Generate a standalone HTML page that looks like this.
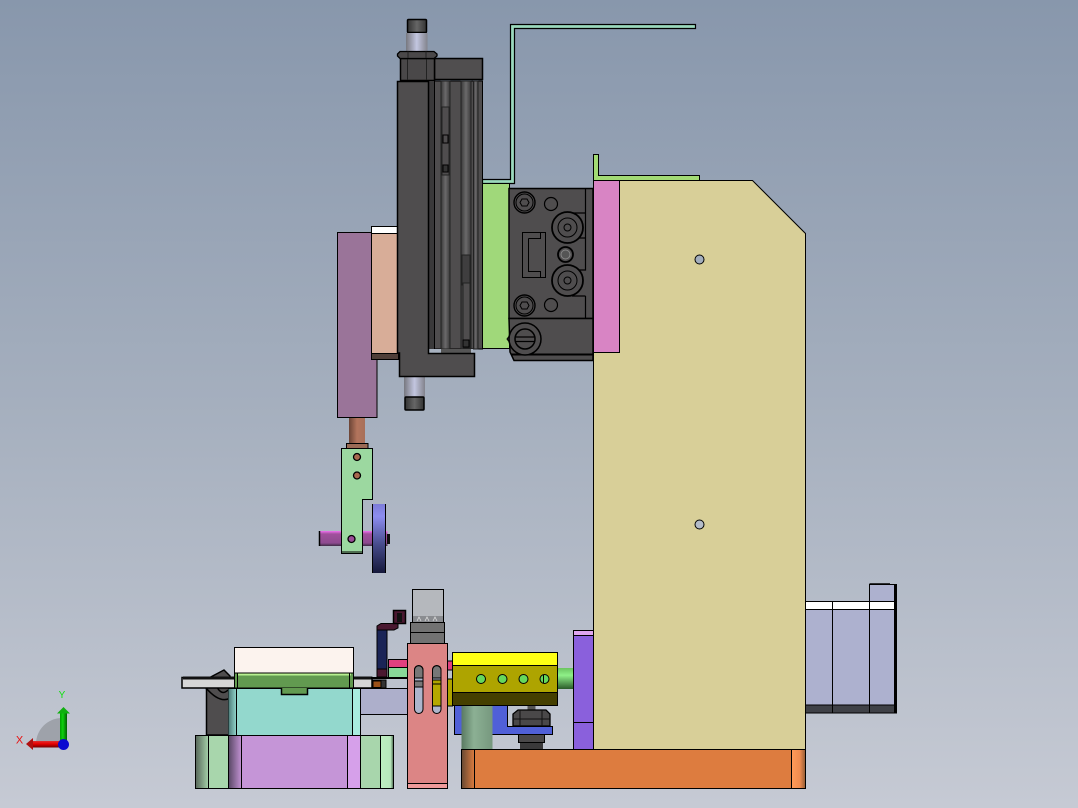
<!DOCTYPE html>
<html><head><meta charset="utf-8"><style>
html,body{margin:0;padding:0;width:1078px;height:808px;overflow:hidden;background:#a8b2c0}
svg{display:block}
text{font-family:"Liberation Sans",sans-serif}
</style></head><body>
<svg width="1078" height="808" viewBox="0 0 1078 808" xmlns="http://www.w3.org/2000/svg">
<defs>
<linearGradient id="bg" x1="0" y1="0" x2="0" y2="1"><stop offset="0" stop-color="#8897ac"/><stop offset=".5" stop-color="#a5afbe"/><stop offset="1" stop-color="#c6cad4"/></linearGradient>
<linearGradient id="rod" x1="0" x2="1" y1="0" y2="0"><stop offset="0" stop-color="#77787f"/><stop offset=".5" stop-color="#c3c6e0"/><stop offset="1" stop-color="#82838c"/></linearGradient>
<linearGradient id="cap" x1="0" x2="1" y1="0" y2="0"><stop offset="0" stop-color="#333"/><stop offset=".5" stop-color="#666"/><stop offset="1" stop-color="#333"/></linearGradient>
<linearGradient id="rib" x1="0" x2="1" y1="0" y2="0"><stop offset="0" stop-color="#3a393a"/><stop offset=".5" stop-color="#6b6a6b"/><stop offset="1" stop-color="#3a393a"/></linearGradient>
<linearGradient id="cop" x1="0" x2="1" y1="0" y2="0"><stop offset="0" stop-color="#6b4436"/><stop offset=".5" stop-color="#b2745c"/><stop offset="1" stop-color="#a8705a"/></linearGradient>
<linearGradient id="wheel" x1="0" x2="0" y1="0" y2="1"><stop offset="0" stop-color="#7c7cd8"/><stop offset=".18" stop-color="#8d8df0"/><stop offset=".6" stop-color="#454a88"/><stop offset="1" stop-color="#15183a"/></linearGradient>
<linearGradient id="pbar" x1="0" x2="0" y1="0" y2="1"><stop offset="0" stop-color="#f070f0"/><stop offset=".2" stop-color="#a0509c"/><stop offset=".8" stop-color="#8e4a90"/><stop offset="1" stop-color="#3c2a44"/></linearGradient>
<linearGradient id="shaft" x1="0" x2="0" y1="0" y2="1"><stop offset="0" stop-color="#6bc460"/><stop offset=".35" stop-color="#8ff088"/><stop offset="1" stop-color="#2a5a2a"/></linearGradient>
<linearGradient id="col" x1="0" x2="1" y1="0" y2="0"><stop offset="0" stop-color="#5a7a62"/><stop offset=".4" stop-color="#8cb094"/><stop offset="1" stop-color="#76987e"/></linearGradient>
<linearGradient id="og" x1="0" x2="1" y1="0" y2="0"><stop offset="0" stop-color="#6a4a32"/><stop offset="1" stop-color="#dd7c3f"/></linearGradient>
<linearGradient id="og2" x1="0" x2="1" y1="0" y2="0"><stop offset="0" stop-color="#ff9a58"/><stop offset=".6" stop-color="#f08c50"/><stop offset="1" stop-color="#9a6036"/></linearGradient>
<linearGradient id="sg" x1="0" x2="1" y1="0" y2="0"><stop offset="0" stop-color="#5a6a5c"/><stop offset="1" stop-color="#a8d6ac"/></linearGradient>
<linearGradient id="sp" x1="0" x2="1" y1="0" y2="0"><stop offset="0" stop-color="#5c4a68"/><stop offset="1" stop-color="#c795d8"/></linearGradient>
<linearGradient id="st" x1="0" x2="1" y1="0" y2="0"><stop offset="0" stop-color="#4e7a78"/><stop offset="1" stop-color="#93d8cd"/></linearGradient>
<linearGradient id="sg2" x1="0" x2="1" y1="0" y2="0"><stop offset="0" stop-color="#bdeec0"/><stop offset=".8" stop-color="#b8e8bc"/><stop offset="1" stop-color="#5a7a60"/></linearGradient>
<linearGradient id="ga" x1="0" x2="1" y1="0" y2="0"><stop offset="0" stop-color="#00a000"/><stop offset=".4" stop-color="#10d010"/><stop offset="1" stop-color="#006000"/></linearGradient>
<linearGradient id="ra" x1="0" x2="0" y1="0" y2="1"><stop offset="0" stop-color="#e03030"/><stop offset=".45" stop-color="#e80000"/><stop offset="1" stop-color="#700000"/></linearGradient>
</defs>
<rect width="1078" height="808" fill="url(#bg)"/>

<g stroke="#000" stroke-width="1">
<path d="M510.5 24.5H695.5V28.5H514.5V183.5H482.5V179.5H510.5Z" fill="#9bd9bd" stroke-width="1.2"/>
<path d="M593.5 154.5H598.5V175.5H699.5V180.5H593.5Z" fill="#a2da74"/>
<path d="M593.5 180.5H752.5L805.5 233.5V749.5H593.5Z" fill="#d8cf98"/>
<rect x="593.5" y="180.5" width="26" height="172" fill="#d884c4"/>
<circle cx="699.5" cy="259.5" r="4.5" fill="#a3aebd"/>
<circle cx="699.5" cy="524.5" r="4.5" fill="#b4bcc9"/>
<rect x="482.5" y="183.5" width="27" height="165" fill="#a0d87a"/>
<rect x="337.5" y="232.5" width="39.500" height="185" fill="#9a7499"/>
<rect x="371.500" y="226.500" width="27" height="7" fill="#fff"/>
<rect x="371.500" y="233.500" width="27" height="120" fill="#d8ad98"/>
<rect x="371.500" y="353.500" width="27" height="6" fill="#4f3e38"/>
</g>

<!-- cylinder -->
<g stroke="#000" stroke-width="1">
<rect x="404" y="376" width="21" height="21" fill="url(#rod)" stroke="none"/>
<rect x="405" y="397" width="19" height="13" rx="1" fill="url(#cap)" stroke-width="1.500"/>
<rect x="407.500" y="19.500" width="19" height="13" rx="1" fill="url(#cap)" stroke-width="1.500"/>
<rect x="406" y="33" width="21.500" height="18" fill="url(#rod)" stroke="none"/>
<rect x="434.500" y="58.500" width="48" height="21" fill="#504e4f" stroke-width="1.500"/>
<rect x="400.500" y="58.500" width="34" height="22" fill="#4a4849" stroke-width="1.500"/>
<path d="M407.500 58V80M426.500 58V80" stroke="#222"/>
<path d="M400 51.500H434L437 54V56L434 58.500H400L397.500 56V54Z" fill="#4a4849" stroke-width="1.300"/>
<path d="M408 51.500V58M426 51.500V58" stroke="#222"/>
<rect x="428" y="81" width="54.500" height="268" fill="#4f4d4e"/>
<rect x="428.500" y="81" width="6" height="268" fill="#3a393a" stroke="none"/>
<rect x="441" y="81" width="9" height="268" fill="url(#rib)" stroke="#222"/>
<rect x="461" y="81" width="10" height="268" fill="url(#rib)" stroke="#222"/>
<rect x="473.500" y="81" width="4.500" height="268" fill="url(#rib)" stroke="#222"/>
<rect x="442" y="107" width="7" height="68" fill="#4f4d4e" stroke="#222"/>
<rect x="443" y="135" width="5" height="8" fill="#4f4d4e"/>
<rect x="443" y="165" width="5" height="7" fill="#333"/>
<rect x="462" y="255" width="8" height="30" fill="#3f3e3f" stroke="#222"/>
<rect x="463" y="283" width="7" height="65" fill="#4f4d4e" stroke="#222"/>
<rect x="463" y="340" width="6" height="7" fill="#333"/>
<path d="M434.500 81V349M482.500 81V349" fill="none"/>
<rect x="429" y="349" width="44" height="4.500" fill="#a8b2c0" stroke="none"/>
<rect x="441" y="349" width="30" height="4.500" fill="#555" stroke="none"/>
<path d="M397.500 81.500H428.500V353.500H474.500V376.500H399.500V353H397.500Z" fill="#4f4d4e" stroke-width="1.500"/>
</g>

<!-- valve block -->
<g stroke="#000" fill="none">
<rect x="509" y="188.500" width="84" height="130" fill="#4f4d4e" stroke-width="1.500"/>
<path d="M585.500 189V213H572M585.500 238V213M572 238H585.500V270H572M585.500 296H572M585.500 296V318" stroke-width="1.200"/>
<path d="M509 318.500H593V360.500H514L510 352Z" fill="#4f4d4e" stroke-width="1.500"/>
<path d="M511 354.500H593" stroke-width="2"/>
<circle cx="524.500" cy="202.500" r="10.500" stroke-width="1.400"/><circle cx="524.500" cy="202.500" r="8.500"/><path d="M520 202.500L522 199H527L529 202.500L527 206H522Z"/>
<circle cx="551" cy="204" r="6.500" stroke-width="1.200"/>
<circle cx="567.500" cy="227.500" r="15.500" fill="#4f4d4e" stroke-width="1.800"/><circle cx="567.500" cy="227.500" r="9.500"/><circle cx="567.500" cy="227.500" r="3.500"/>
<circle cx="565.500" cy="254.500" r="7.500" stroke-width="1.800"/><circle cx="565.500" cy="254.500" r="4.500" stroke="#888" fill="#555"/>
<circle cx="567.500" cy="280.500" r="15.500" fill="#4f4d4e" stroke-width="1.800"/><circle cx="567.500" cy="280.500" r="9.500"/><circle cx="567.500" cy="280.500" r="3.500"/>
<circle cx="524.500" cy="305.500" r="10.500" stroke-width="1.400"/><circle cx="524.500" cy="305.500" r="8.500"/><path d="M520 305.500L522 302H527L529 305.500L527 309H522Z"/>
<circle cx="551" cy="305" r="6.500" stroke-width="1.200"/>
<path d="M522.500 232.500H545.500V277.500H522.500ZM528.500 238.500H540.500V232.500M528.500 238.500V271.500H540.500V277.500"/>
<path d="M507 339L510 335V343Z" fill="#4f4d4e"/>
<circle cx="525" cy="339" r="16" fill="#4f4d4e" stroke-width="1.500"/><circle cx="525" cy="339" r="10" stroke-width="1.500"/><path d="M516 337H534M516 341.500H534" stroke-width="1.300"/>
</g>

<!-- middle hanging plate -->
<g stroke="#000">
<rect x="349" y="418" width="16" height="25" fill="url(#cop)" stroke="none"/>
<rect x="346.500" y="443.500" width="21.500" height="5" fill="#9a6a55" stroke-width="1"/>
<rect x="319.500" y="531" width="68" height="15" fill="url(#pbar)" stroke="none"/>
<path d="M319.500 531V546" stroke-width="1.500"/>
<rect x="387" y="534" width="3" height="10" fill="#111" stroke="none"/>
<path d="M341.500 448.500H372.500V499.500H362.500V553.500H341.500Z" fill="#9cd8a0"/>
<path d="M341.500 552H362.500" stroke-width="1"/>
<circle cx="357" cy="457" r="3.500" fill="#a8684e" stroke-width="1.300"/>
<circle cx="357" cy="475.500" r="3.500" fill="#a8684e" stroke-width="1.300"/>
<circle cx="351.500" cy="539" r="3.500" fill="#9a4c98" stroke-width="1.300"/>
<rect x="372.500" y="504" width="13.500" height="69" fill="url(#wheel)" stroke="none"/>
<path d="M372.500 504V573M385.500 504V573"/>
</g>

<!-- lower-left fixture -->
<g stroke="#000">
<path d="M206.500 735V690L205 680L224 670L230 676V735Z" fill="#4f4d4e" stroke-width="1.500"/>
<path d="M206 688q14 16 24 10M214 680q6 18 14 10" fill="none" stroke-width="1.500"/>
<rect x="182" y="677.500" width="54" height="10.500" fill="#d6d6d6" stroke-width="1.500"/>
<rect x="183" y="676.500" width="52" height="3" fill="#111" stroke="none"/>
<rect x="353" y="677.500" width="19" height="10.500" fill="#d6d6d6" stroke-width="1.500"/>
<rect x="354" y="676.500" width="18" height="3" fill="#111" stroke="none"/>
<rect x="360.500" y="688.500" width="47" height="26" fill="#adafcb"/>
<rect x="234.500" y="647.500" width="119" height="25.500" fill="#fcf3ee"/>
<rect x="228.500" y="688.500" width="132" height="47" fill="#93d8cd"/>
<rect x="228.500" y="689" width="8" height="46" fill="url(#st)" stroke="none"/>
<path d="M236.500 688V735M352.500 688V735"/>
<rect x="353" y="689" width="7" height="46" fill="#a8ecdf" stroke="none"/>
<rect x="234.500" y="673" width="119" height="15" fill="#629a50"/>
<rect x="237" y="673" width="114" height="2.500" fill="#b8f090" stroke="none"/>
<path d="M234.500 673H353.500" />
<path d="M237.500 673V688M349.500 673V688"/>
<path d="M281.500 688V694.500H307.500V688H303V690.500H284V688Z" fill="#629a50"/>
<rect x="282" y="688" width="25" height="6" fill="#629a50" stroke="none"/>
<path d="M281.500 688V694.500H307.500V688" fill="none" stroke-width="1.500"/>
<rect x="195.500" y="735.500" width="33" height="53" fill="#a8d6ac"/>
<rect x="196" y="736" width="13" height="52" fill="url(#sg)" stroke="none"/>
<path d="M208.500 735.500V788.500"/>
<rect x="360.500" y="735.500" width="33" height="53" fill="#a8d6ac"/>
<rect x="380.500" y="736" width="12.500" height="52" fill="url(#sg2)" stroke="none"/>
<path d="M380.500 735.500V788.500"/>
<rect x="228.500" y="735.500" width="132" height="53" fill="#c595d7"/>
<rect x="229" y="736" width="13" height="52" fill="url(#sp)" stroke="none"/>
<rect x="348" y="736" width="12" height="52" fill="#d6a0ea" stroke="none"/>
<path d="M241.500 735.500V788.500M347.500 735.500V788.500"/>
<!-- pipe -->
<rect x="377" y="630" width="10" height="39" fill="#1a2456"/>
<rect x="377" y="669" width="10" height="8" fill="#4a1830"/>
<path d="M377 631V626L381 623.500H398V628L394 630H377Z" fill="#4a1830" stroke-width="1"/>
<rect x="393.500" y="610.500" width="12" height="13" fill="#4a1830" stroke-width="1.500"/>
<rect x="397" y="613" width="5" height="9" fill="#111" stroke="none"/>
<rect x="388.500" y="659.500" width="19" height="8" fill="#e0417f"/>
<rect x="388.500" y="667.500" width="19" height="10" fill="#88d898"/>
<rect x="372" y="680" width="14" height="8" fill="#333" stroke-width="1"/>
<rect x="373" y="681" width="8" height="6.500" fill="#9a5018" stroke-width="1"/>
<path d="M371 678H407" stroke-width="2"/>
</g>

<!-- center assembly -->
<g stroke="#000">
<rect x="412.500" y="589.500" width="31" height="33" fill="#b5b8bd"/>
<rect x="413" y="616" width="30" height="6" fill="#8a8c90" stroke="none"/>
<path d="M417 621L419 617L421 621M425 621L427 617L429 621M433 621L435 617L437 621" fill="none" stroke="#ddd" stroke-width=".8"/>
<rect x="410.500" y="622.500" width="34" height="10" fill="#727272"/>
<rect x="410.500" y="632.500" width="34" height="11" fill="#727272"/>
<rect x="447.500" y="661" width="5" height="9" fill="#e0417f"/>
<rect x="447.500" y="679" width="5" height="27" fill="#aea400"/>
<rect x="407.500" y="643.500" width="40" height="145" fill="#dc8585"/>
<path d="M407.500 783.500H447.500" />
<rect x="408" y="784" width="39" height="4" fill="#ee9a9a" stroke="none"/>
<rect x="414.500" y="665.500" width="8.500" height="48" rx="4.250" fill="#adb5cc"/>
<path d="M414.500 670a4.250 4.250 0 0 1 8.500 0V678H414.500Z" fill="#777"/>
<rect x="414.500" y="681" width="8.500" height="6" fill="#777"/>
<rect x="432.500" y="665.500" width="8.500" height="48" rx="4.250" fill="#adb5cc"/>
<path d="M432.500 670a4.250 4.250 0 0 1 8.500 0V678H432.500Z" fill="#777"/>
<rect x="432.500" y="680" width="8.500" height="4" fill="#aea400"/>
<rect x="432.500" y="684" width="8.500" height="22" fill="#b5a800"/>

<path d="M454.500 705.500H507.500V726.500H552.500V734.500H454.500Z" fill="#5060d8"/>
<rect x="461.500" y="706" width="31" height="44" fill="url(#col)" stroke="none"/>
<rect x="527.500" y="705.500" width="8" height="5" fill="#555" stroke="none"/>
<path d="M518 710H546L550 714V726H513V714Z" fill="#4a4849" stroke-width="1.300"/>
<path d="M513 719H550M520 710V726M542 710V726" stroke="#111"/>
<rect x="518.500" y="734.500" width="26" height="8" fill="#4a4849"/>
<rect x="520" y="743" width="23" height="7" fill="#3a393a" stroke="none"/>
<rect x="557.500" y="668" width="16" height="21" fill="url(#shaft)" stroke="none"/>
<rect x="452.500" y="652.500" width="105" height="13" fill="#ffff14"/>
<rect x="452.500" y="665.500" width="105" height="27" fill="#aea400"/>
<rect x="452.500" y="692.500" width="105" height="13" fill="#453f00"/>
<circle cx="481" cy="679" r="4.500" fill="#66d85c"/>
<circle cx="502.500" cy="679" r="4.500" fill="#66d85c"/>
<circle cx="523.500" cy="679" r="4.500" fill="#66d85c"/>
<circle cx="544.500" cy="679" r="4.500" fill="#66d85c"/>
<path d="M543.500 674.500V683.500"/>
<rect x="573.500" y="630.500" width="20" height="5" fill="#dfa6f0"/>
<rect x="573.500" y="635.500" width="20" height="87" fill="#8a60dc"/>
<rect x="573.500" y="722.500" width="20" height="27" fill="#8a60dc"/>
<rect x="461.500" y="749.500" width="344" height="39" fill="#dd7c3f"/>
<rect x="462" y="750" width="12.500" height="38" fill="url(#og)" stroke="none"/>
<rect x="792" y="750" width="13" height="38" fill="url(#og2)" stroke="none"/>
<path d="M474.500 749.500V788.500M791.500 749.500V788.500"/>
</g>

<!-- motor -->
<g stroke="#000">
<rect x="869.500" y="584.500" width="26" height="17" fill="#adb1cf"/>
<path d="M869.500 584H890" stroke-width="1.500"/>
<rect x="805.500" y="601.500" width="90" height="8" fill="#fff"/>
<rect x="805.500" y="609.500" width="90" height="95.500" fill="#adb1cf"/>
<rect x="805.500" y="705" width="90" height="8" fill="#3f4147"/>
<path d="M832.500 601.500V713M869.500 601.500V713M894.500 584.500V713"/>
<path d="M869.500 584.500H896.500V713H894" fill="none"/>
</g>

<!-- triad -->
<path d="M62 744H36A26 26 0 0 1 62 718Z" fill="#9ea2aa"/>
<rect x="60" y="713" width="7" height="30" fill="url(#ga)"/>
<path d="M63.500 707L70 713.500H57Z" fill="#10b010"/>
<rect x="33" y="741" width="30" height="6.500" fill="url(#ra)"/>
<path d="M26 744L33 738V750Z" fill="#b01010"/>
<circle cx="63.500" cy="744.500" r="5.500" fill="#0a0ad0"/>
<text x="62" y="698" font-size="10" fill="#10e010" text-anchor="middle">Y</text>
<text x="19.500" y="743.500" font-size="11" fill="#e81010" text-anchor="middle">X</text>
</svg>
</body></html>
